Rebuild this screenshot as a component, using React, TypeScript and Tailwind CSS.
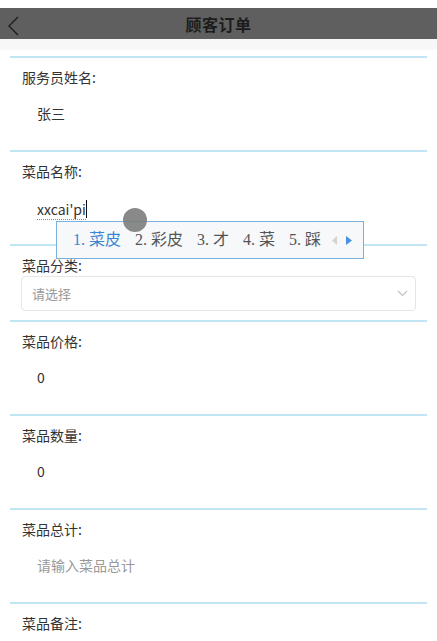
import React from 'react';

const font = "font-['Microsoft_YaHei','Noto_Sans_CJK_SC',sans-serif]";

const Field = ({ label, children }: { label: string; children?: React.ReactNode }) => (
    <div className="relative mx-[10px] border-t-2 border-[#bfe6f2] pt-[9px] pb-[27px]">
        <div className="pl-[12px] text-[14px] leading-[20px] text-[#333]">{label}</div>
        <div className="mt-[16px] h-[20px] pl-[27px] text-[14px] leading-[20px] text-[#333]">{children}</div>
    </div>
);

const App = () => {
    return (
        <div className={`h-[641px] w-[437px] overflow-hidden bg-white ${font}`}>
            {/* header */}
            <div className="h-[8px] bg-white" />
            <div className="relative flex h-[31px] items-center justify-center bg-[#5f5f5f]">
                <svg className="absolute left-[7px] top-[8px]" width="13" height="20" viewBox="0 0 13 20">
                    <path d="M11 1 L2 10 L11 19" fill="none" stroke="#1e1e1e" strokeWidth="1.4" />
                </svg>
                <span className="text-[16px] font-bold tracking-[0.5px] text-[#1c1c1c]">顾客订单</span>
            </div>
            <div className="h-[11px] bg-[#f7f7f7]" />
            <div className="h-[6px]" />

            <Field label="服务员姓名:">张三</Field>

            <Field label="菜品名称:">
                <span className="border-b border-dotted border-[#888]">xxcai'pi</span>
                <span className="inline-block h-[18px] w-px translate-y-[3px] bg-[#111]" />
                {/* touch indicator */}
                <div className="absolute left-[113px] top-[56px] z-20 h-[24px] w-[24px] rounded-full bg-[#7d7d7d] opacity-90 blur-[0.5px]" />
                {/* ime candidates */}
                <div className="absolute left-[46px] top-[69px] z-10 flex h-[38px] w-[308px] items-center whitespace-pre border border-[#79b0e0] bg-[#f6f8fa] pl-[16px] font-['Liberation_Serif','Noto_Sans_CJK_SC',serif] text-[16px] text-[#555]">
                    <span className="text-[#3a86d4]">1. 菜皮</span>
                    <span className="ml-[14px]">2. 彩皮</span>
                    <span className="ml-[14px]">3. 才</span>
                    <span className="ml-[14px]">4. 菜</span>
                    <span className="ml-[14px]">5. 踩</span>
                    <svg className="ml-[11px]" width="6" height="9" viewBox="0 0 6 9"><path d="M5 0 L0 4.5 L5 9Z" fill="#d4d4d4" /></svg>
                    <svg className="ml-[8px]" width="6" height="9" viewBox="0 0 6 9"><path d="M0 0 L6 4.5 L0 9Z" fill="#4a90e2" /></svg>
                </div>
            </Field>

            <div className="mx-[10px] border-t-2 border-[#bfe6f2] pt-[9px] pb-[9px]">
                <div className="pl-[12px] text-[14px] leading-[20px] text-[#333]">菜品分类:</div>
                <div className="mx-[11px] mt-px flex h-[35px] items-center justify-between rounded-[4px] border border-[#e6e6e6] pl-[10px] pr-[7px] text-[13px] text-[#999]">
                    <span>请选择</span>
                    <svg width="11" height="7" viewBox="0 0 11 7">
                        <path d="M1 1 L5.5 5.5 L10 1" fill="none" stroke="#c0c0c0" strokeWidth="1.1" />
                    </svg>
                </div>
            </div>

            <Field label="菜品价格:">0</Field>
            <Field label="菜品数量:">0</Field>
            <Field label="菜品总计:">
                <span className="text-[#999]">请输入菜品总计</span>
            </Field>
            <Field label="菜品备注:" />
        </div>
    );
};

export default App;
